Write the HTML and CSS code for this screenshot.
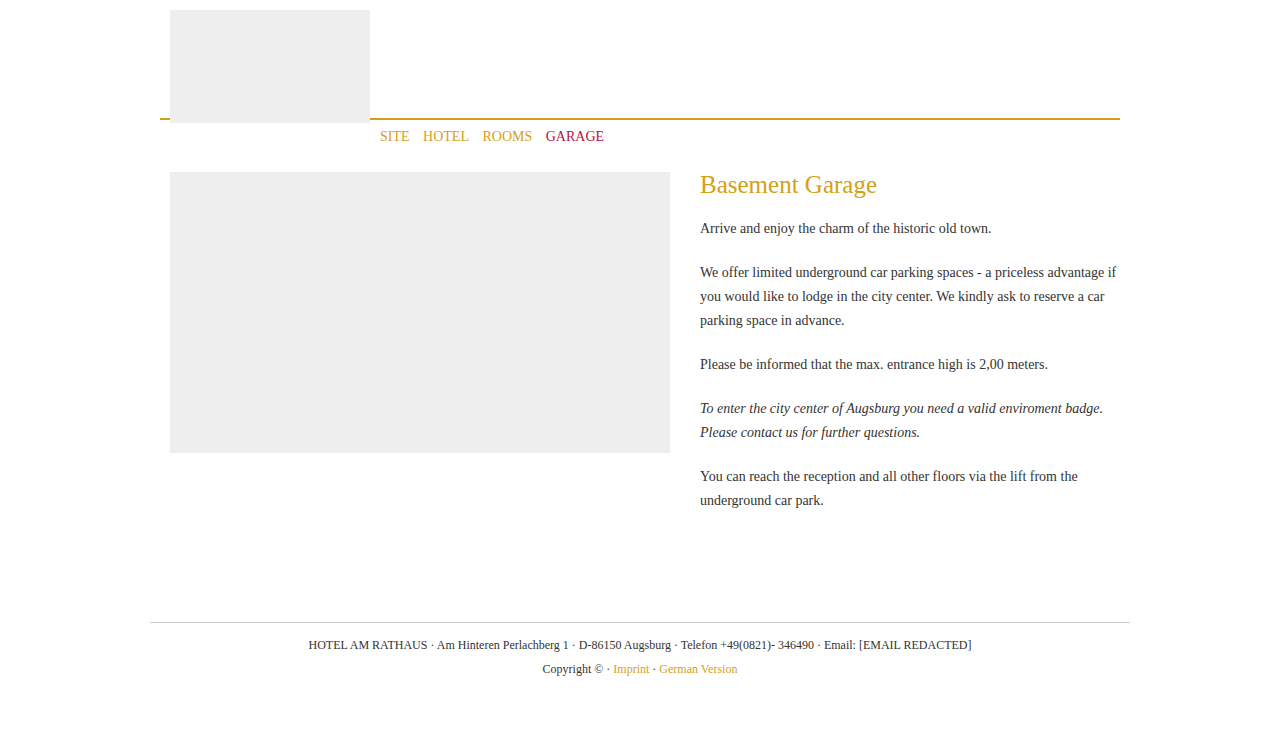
FILE: index.html
```html
<!DOCTYPE html>
<html lang="en">
<head>
<meta charset="utf-8">
<title>Basement Garage - Hotel am Rathaus</title>
<link rel="stylesheet" href="styles.css">
</head>
<body>
<div class="page">
  <header class="header">
    <div class="logo"></div>
  </header>
  <nav class="nav">
    <a href="#" class="nav-link">SITE</a>
    <a href="#" class="nav-link">HOTEL</a>
    <a href="#" class="nav-link">ROOMS</a>
    <a href="#" class="nav-link active">GARAGE</a>
  </nav>
  <main class="main">
    <div class="photo"></div>
    <section class="content">
      <h1 class="title">Basement Garage</h1>
      <p>Arrive and enjoy the charm of the historic old town.</p>
      <p>We offer limited underground car parking spaces - a priceless advantage if you would like to lodge in the city center. We kindly ask to reserve a car parking space in advance.</p>
      <p>Please be informed that the max. entrance high is 2,00 meters.</p>
      <p class="note">To enter the city center of Augsburg you need a valid enviroment badge. Please contact us for further questions.</p>
      <p>You can reach the reception and all other floors via the lift from the underground car park.</p>
    </section>
  </main>
</div>
<footer class="footer">
  <p>HOTEL AM RATHAUS · Am Hinteren Perlachberg 1 · D-86150 Augsburg · Telefon +49(0821)- 346490 · Email: [EMAIL REDACTED]</p>
  <p>Copyright © · <a href="#">Imprint</a> · <a href="#">German Version</a></p>
</footer>
</body>
</html>
```
FILE: styles.css
```css
html, body {
  margin: 0;
  padding: 0;
  background: #ffffff;
}
body {
  font-family: "Liberation Serif", "Times New Roman", serif;
  font-size: 14px;
  color: #333333;
}
.page {
  width: 960px;
  margin: 0 auto;
}
.header {
  height: 108px;
  padding-top: 10px;
  border-bottom: 2px solid #d4a017;
}
.logo {
  width: 200px;
  height: 113px;
  margin-left: 10px;
  background: #eeeeee;
  position: relative;
}
.nav {
  display: flex;
  gap: 13.5px;
  margin-left: 220px;
  padding-top: 7px;
  line-height: 20px;
  font-size: 14px;
}
.nav-link {
  color: #d4a017;
  text-decoration: none;
}
.nav-link.active {
  color: #b5123e;
}
.main {
  display: flex;
  gap: 30px;
  margin-top: 25px;
  padding-left: 10px;
}
.photo {
  width: 500px;
  height: 281px;
  background: #eeeeee;
  flex-shrink: 0;
}
.content {
  width: 420px;
}
.title {
  margin: -2px 0 17px;
  font-size: 25px;
  line-height: 30px;
  font-weight: normal;
  color: #d4a017;
}
.content p {
  margin: 0 0 20px;
  line-height: 24px;
}
.content .note {
  font-style: italic;
}
.footer {
  width: 980px;
  margin: 89px auto 0;
  border-top: 1px solid #cccccc;
  padding-top: 10px;
  text-align: center;
  font-size: 12px;
}
.footer p {
  margin: 0;
  line-height: 24px;
}
.footer a {
  color: #d4a017;
  text-decoration: none;
}
```
